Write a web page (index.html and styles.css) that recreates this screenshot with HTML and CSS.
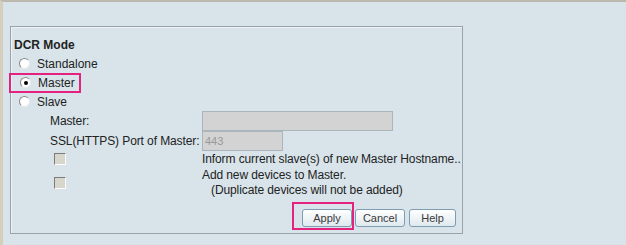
FILE: index.html
```html
<!DOCTYPE html>
<html>
	<head>
		<meta charset="utf-8">
		<title>DCR Mode</title>
		<link rel="stylesheet" href="styles.css">
	</head>
	<body>
		<div class="page">
			<div class="panel">
				<div class="title">DCR Mode</div>
				<div class="opt">
					<span class="radio"></span><span>Standalone</span>
				</div>
				<div class="opt mark-row">
					<span class="mark"><span class="radio on"></span><span>Master</span></span>
				</div>
				<div class="opt">
					<span class="radio"></span><span>Slave</span>
				</div>
				<div class="slave">
					<div class="lbl">Master:</div>
					<div><span class="field wide"></span></div>
					<div class="lbl">SSL(HTTPS) Port of Master:</div>
					<div><span class="field short">443</span></div>
					<div class="chk-cell"><span class="chk"></span></div>
					<div class="txt">Inform current slave(s) of new Master Hostname..</div>
					<div class="chk-cell"><span class="chk"></span></div>
					<div class="txt">Add new devices to Master.<br><span class="indent">(Duplicate devices will not be added)</span></div>
				</div>
				<div class="buttons">
					<span class="mark btn-mark"><button class="btn">Apply</button></span>
					<button class="btn">Cancel</button>
					<button class="btn help">Help</button>
				</div>
			</div>
		</div>
	</body>
</html>
```

FILE: styles.css
```css
*{
	margin: 0;
	padding: 0;
	box-sizing: border-box;
}
body{
	width: 626px;
	height: 245px;
	overflow: hidden;
	font-family: "Liberation Sans", Arial, sans-serif;
	font-size: 12px;
	color: #222;
}
.page{
	height: 245px;
	background-color: #d8e4ea;
	border-top: 2px solid #bcb8ac;
	border-left: 3px solid #d6cebc;
	padding: 24px 0 0 7px;
}
.panel{
	width: 453px;
	height: 208px;
	border: 1px solid #98a2a8;
	box-shadow: inset 1px 1px 0 #eef3f5;
	padding: 11px 0 0 3px;
	white-space: nowrap;
}
.title{
	font-weight: bold;
	height: 16px;
	line-height: 15px;
}
.opt{
	display: flex;
	align-items: center;
	height: 19px;
	padding-left: 5px;
}
.radio{
	width: 11px;
	height: 11px;
	border-radius: 50%;
	background: #fff;
	border: 1px solid;
	border-color: #8a8a8a #e8e8e8 #e8e8e8 #8a8a8a;
	margin-right: 7px;
	position: relative;
	flex: none;
}
.radio.on::after{
	content: "";
	position: absolute;
	left: 3px;
	top: 3px;
	width: 4px;
	height: 4px;
	border-radius: 50%;
	background: #000;
}
.mark{
	border: 2px solid #e3237f;
}
.mark-row .mark{
	display: flex;
	align-items: center;
	height: 20px;
	margin-left: -10px;
	padding: 0 4px 0 9px;
}
.slave{
	display: grid;
	grid-template-columns: 152px 1fr;
	margin-left: 36px;
	align-items: center;
}
.lbl{
	height: 20px;
	line-height: 20px;
	letter-spacing: -0.1px;
}
.field{
	display: block;
	height: 20px;
	background: #d3d3d3;
	border: 1px solid #a9b6bb;
	color: #999;
	font-size: 11px;
	line-height: 18px;
	padding-left: 2px;
}
.wide{
	width: 191px;
}
.short{
	width: 81px;
}
.chk-cell{
	padding-left: 4px;
}
.chk{
	display: block;
	width: 12px;
	height: 12px;
	background: #d8d5cd;
	border: 1px solid;
	border-color: #7c7c7c #fbfbfb #fbfbfb #7c7c7c;
}
.txt{
	line-height: 15px;
	padding-top: 1px;
	letter-spacing: -0.1px;
}
.indent{
	padding-left: 9px;
}
.buttons{
	display: flex;
	justify-content: flex-end;
	align-items: flex-end;
	gap: 4px;
	margin: 4px 6px 0 0;
}
.btn-mark{
	display: flex;
	align-items: flex-end;
	height: 28px;
	padding: 0 0 1px 8px;
	margin-right: -3px;
	width: 62px;
}
.btn{
	width: 50px;
	height: 18px;
	margin-bottom: 3px;
	font-family: "Liberation Sans", Arial, sans-serif;
	font-size: 11px;
	color: #3a3a3a;
	border: 1px solid #7f9db2;
	border-radius: 3px;
	background: linear-gradient(#ffffff, #dfe9ef);
}
.btn-mark .btn{
	margin-bottom: 0;
}
.help{
	width: 47px;
}
```
